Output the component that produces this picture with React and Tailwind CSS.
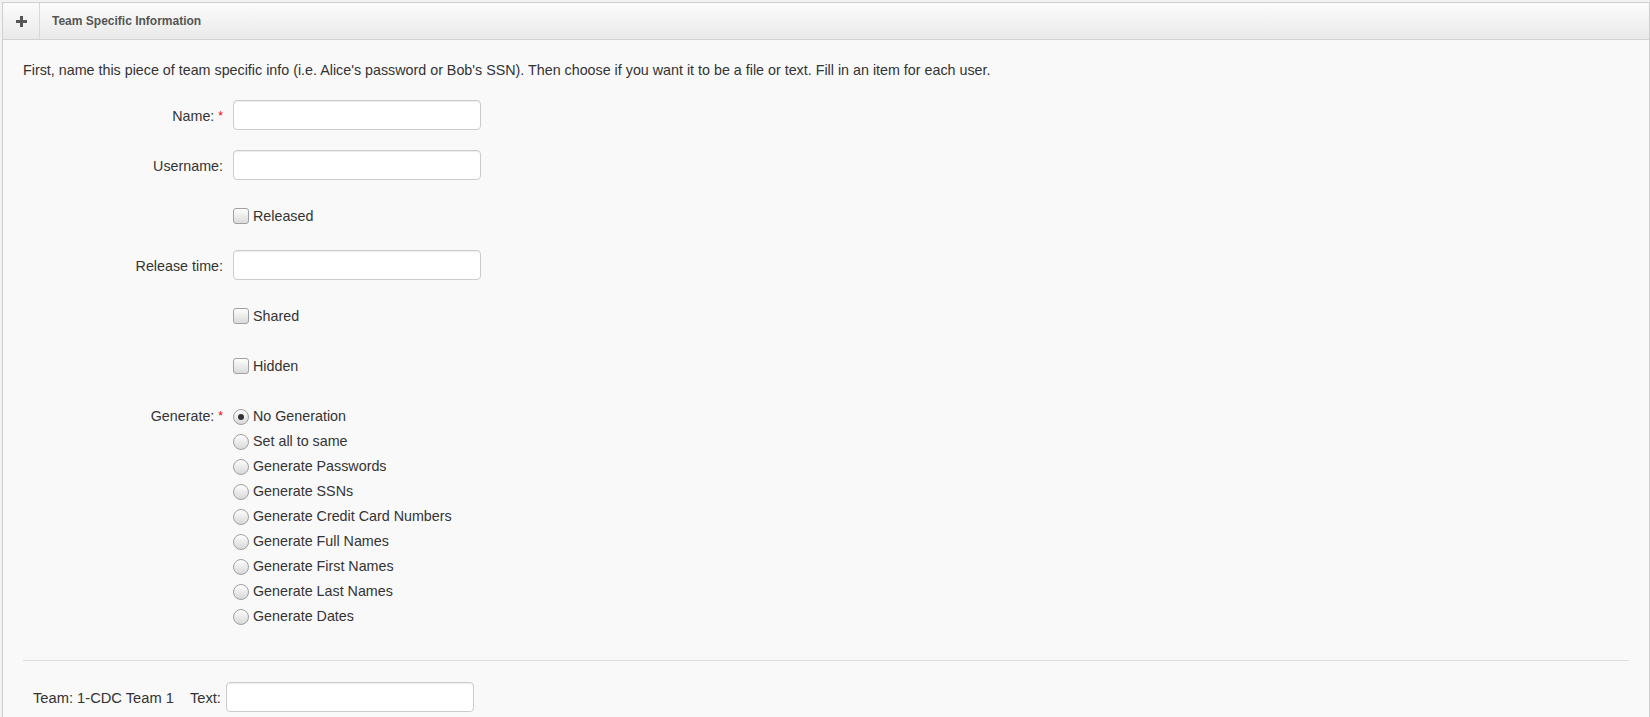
import React from "react";

const font = "font-['Liberation_Sans',Arial,Helvetica,sans-serif]";

function Checkbox() {
  return (
    <span className="inline-block w-[16px] h-[16px] rounded-[3px] border border-[#a0a0a0] bg-linear-to-b from-[#fefefe] to-[#dadada] shadow-[inset_0_1px_0_rgba(255,255,255,0.8)] shrink-0" />
  );
}

function Radio({ checked }) {
  return (
    <span className="relative inline-flex items-center justify-center w-[16px] h-[16px] rounded-full border border-[#a0a0a0] bg-linear-to-b from-[#fefefe] to-[#d8d8d8] shrink-0">
      {checked && <span className="w-[6px] h-[6px] rounded-full bg-[#333]" />}
    </span>
  );
}

function TextInput({ w = "w-[248px]" }) {
  return (
    <input
      type="text"
      className={`${w} h-[30px] rounded-[4px] border border-[#cccccc] bg-white px-2 text-[14px] outline-none shadow-[inset_0_1px_1px_rgba(0,0,0,0.075)]`}
    />
  );
}

function Star() {
  return <span className="text-[#e00] ml-[4px] text-[12px] relative -top-[1px]">*</span>;
}

function Label({ children, required }) {
  return (
    <div className="w-[200px] shrink-0 flex justify-end items-center text-right pt-[3px]">
      <span>{children}</span>
      {required && <Star />}
    </div>
  );
}

function Row({ label, required, children }) {
  return (
    <div className="flex items-center h-[30px] gap-[10px]">
      <Label required={required}>{label}</Label>
      {children}
    </div>
  );
}

function CheckRow({ text }) {
  return (
    <div className="flex items-center h-[30px] gap-[10px]">
      <div className="w-[200px] shrink-0" />
      <label className="flex items-center gap-[4px] pt-[2px]">
        <Checkbox />
        <span className="pt-[1px]">{text}</span>
      </label>
    </div>
  );
}

const options = [
  "No Generation",
  "Set all to same",
  "Generate Passwords",
  "Generate SSNs",
  "Generate Credit Card Numbers",
  "Generate Full Names",
  "Generate First Names",
  "Generate Last Names",
  "Generate Dates",
];

export default function App() {
  return (
    <div className={`${font} min-h-screen bg-[#f2f2f2] pl-[2px] pt-[2px] text-[14.3px] text-[#333]`}>
      <div className="border-l border-t border-r border-[#cfcfcf] bg-[#f9f9f9] min-h-[715px]">
        <div className="flex h-[37px] border-b border-[#d2d2d2] bg-linear-to-b from-[#fbfbfb] to-[#e9e9e9]">
          <div className="w-[37px] shrink-0 border-r border-[#d8d8d8] flex items-center justify-center">
            <svg width="11" height="11" viewBox="0 0 11 11">
              <rect x="4" y="0" width="3" height="11" fill="#555" />
              <rect x="0" y="4" width="11" height="3" fill="#555" />
            </svg>
          </div>
          <div className="flex items-center pl-[12px] text-[12px] font-bold text-[#555]">
            Team Specific Information
          </div>
        </div>
        <div className="px-[20px] pt-[20px]">
          <p className="leading-[20px]">
            First, name this piece of team specific info (i.e. Alice's password or Bob's SSN). Then choose if you want it to be a file or text. Fill in an item for each user.
          </p>
          <div className="mt-[20px] flex flex-col gap-[20px]">
            <Row label="Name:" required>
              <TextInput />
            </Row>
            <Row label="Username:">
              <TextInput />
            </Row>
            <CheckRow text="Released" />
            <Row label="Release time:">
              <TextInput />
            </Row>
            <CheckRow text="Shared" />
            <CheckRow text="Hidden" />
            <div className="flex gap-[10px] mt-[3px]">
              <div className="w-[200px] shrink-0 flex justify-end h-[25px] items-center pt-[2px]">
                <span>Generate:</span>
                <Star />
              </div>
              <div className="flex flex-col">
                {options.map((o, i) => (
                  <label key={o} className="flex items-center gap-[4px] h-[25px] pt-[2px]">
                    <Radio checked={i === 0} />
                    <span>{o}</span>
                  </label>
                ))}
              </div>
            </div>
          </div>
          <div className="mt-[32px] border-t border-[#dcdcdc]" />
          <div className="mt-[21px] flex items-center pl-[10px] text-[14.7px]">
            <span className="pt-[2px]">Team: 1-CDC Team 1</span>
            <span className="ml-[16px] mr-[5px] pt-[2px]">Text:</span>
            <TextInput w="w-[248px]" />
          </div>
        </div>
      </div>
    </div>
  );
}
